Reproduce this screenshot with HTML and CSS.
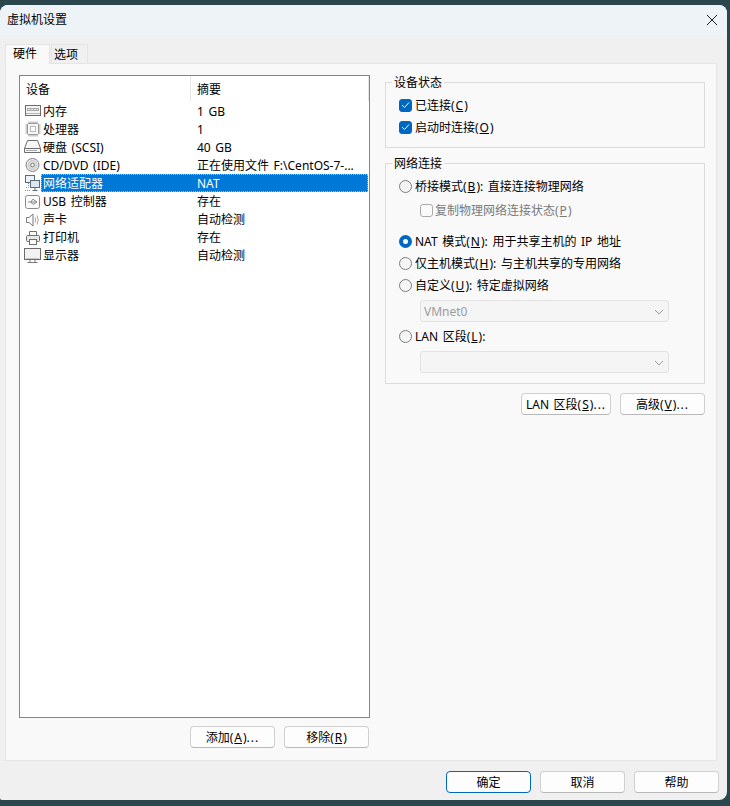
FILE: index.html
```html
<!DOCTYPE html>
<html lang="zh-CN">
<head>
<meta charset="utf-8">
<title>虚拟机设置</title>
<link rel="stylesheet" href="styles.css">
</head>
<body>
<div class="window">
  <header class="titlebar">
    <span class="title">虚拟机设置</span>
    <svg class="close" width="12" height="12" viewBox="0 0 12 12"><path d="M1 1L11 11M11 1L1 11" stroke="#222" stroke-width="1" fill="none"/></svg>
  </header>
  <div class="tabs">
    <div class="tab active">硬件</div>
    <div class="tab">选项</div>
  </div>
  <main class="panel">
    <section class="left">
      <div class="list">
        <div class="list-head">
          <div class="col-a">设备</div>
          <div class="col-b">摘要</div>
        </div>
        <div class="row">
          <svg class="icon" width="18" height="16" viewBox="0 0 18 16"><rect x="2.500" y="2.500" width="15" height="10" fill="#f4f4f4" stroke="#6c6c6c"/><rect x="4" y="5" width="12" height="3" fill="#a9a9a9"/><path d="M5 6.500h10" stroke="#eee" stroke-dasharray="2 1"/><path d="M3 10.500h14" stroke="#b5b5b5"/></svg>
          <div class="cells"><span class="name">内存</span><span class="sum">1 GB</span></div>
        </div>
        <div class="row">
          <svg class="icon" width="18" height="16" viewBox="0 0 18 16"><rect x="4.500" y="2.500" width="11" height="11" rx="1" fill="#f6f6f6" stroke="#999"/><rect x="7.500" y="5.500" width="5" height="5" fill="#fff" stroke="#777" stroke-dasharray="1 1"/><path d="M6 0.500v2M8 0.500v2M10 0.500v2M12 0.500v2M14 0.500v2M6 13.500v2M8 13.500v2M10 13.500v2M12 13.500v2M14 13.500v2M2.500 4h2M2.500 6h2M2.500 8h2M2.500 10h2M2.500 12h2M15.500 4h2M15.500 6h2M15.500 8h2M15.500 10h2M15.500 12h2" stroke="#999" fill="none"/></svg>
          <div class="cells"><span class="name">处理器</span><span class="sum">1</span></div>
        </div>
        <div class="row">
          <svg class="icon" width="18" height="16" viewBox="0 0 18 16"><path d="M4.500 1.500h10l3 8v4h-16v-4z" fill="#f7f7f7" stroke="#6c6c6c"/><path d="M1.500 9.500h16" stroke="#6c6c6c"/><path d="M3 11.500h11" stroke="#aaa"/></svg>
          <div class="cells"><span class="name">硬盘 (SCSI)</span><span class="sum">40 GB</span></div>
        </div>
        <div class="row">
          <svg class="icon" width="18" height="16" viewBox="0 0 18 16"><circle cx="9.500" cy="8" r="6.500" fill="#efefef" stroke="#808080"/><circle cx="9.500" cy="8" r="4.500" fill="#dcdcdc" stroke="#c6c6c6"/><circle cx="9.500" cy="8" r="1.800" fill="#fff" stroke="#777"/></svg>
          <div class="cells"><span class="name">CD/DVD (IDE)</span><span class="sum">正在使用文件 F:\CentOS-7-...</span></div>
        </div>
        <div class="row">
          <svg class="icon" width="18" height="16" viewBox="0 0 18 16"><rect x="2.500" y="0.500" width="9" height="7" fill="#eef3f8" stroke="#5b6b7b"/><rect x="7.500" y="5.500" width="9" height="7" fill="#dbe6f0" stroke="#5b6b7b"/><path d="M12 13v2M9.500 15.500h5" stroke="#5b6b7b"/><path d="M5.500 8v4.500H2M2 15.500h5" stroke="#8a8a8a" stroke-dasharray="1 1" fill="none"/></svg>
          <div class="cells selected"><span class="name">网络适配器</span><span class="sum">NAT</span></div>
        </div>
        <div class="row">
          <svg class="icon" width="18" height="16" viewBox="0 0 18 16"><rect x="2.500" y="1.500" width="14" height="13" rx="2" fill="#fbfbfb" stroke="#8a8a8a"/><path d="M5 8h9M11 6l3 2-3 2M8 8l1.500-2.500H11M8 8l1.500 2H11" stroke="#8a8a8a" fill="none"/></svg>
          <div class="cells"><span class="name">USB 控制器</span><span class="sum">存在</span></div>
        </div>
        <div class="row">
          <svg class="icon" width="18" height="16" viewBox="0 0 18 16"><path d="M3.500 5.500h2.500l4-3.500v12l-4-3.500H3.500z" fill="#fafafa" stroke="#7d7d7d"/><path d="M12 5.500q1.500 2.500 0 5M14 3.500q2.500 4.500 0 9" stroke="#a5a5a5" fill="none"/></svg>
          <div class="cells"><span class="name">声卡</span><span class="sum">自动检测</span></div>
        </div>
        <div class="row">
          <svg class="icon" width="18" height="16" viewBox="0 0 18 16"><path d="M6.500 5.500v-4h7v4" fill="#fff" stroke="#707070"/><rect x="3.500" y="5.500" width="13" height="6" rx="1" fill="#e8e8e8" stroke="#707070"/><rect x="6.500" y="9.500" width="7" height="5" fill="#fff" stroke="#707070"/></svg>
          <div class="cells"><span class="name">打印机</span><span class="sum">存在</span></div>
        </div>
        <div class="row">
          <svg class="icon" width="18" height="16" viewBox="0 0 18 16"><rect x="1.500" y="0.500" width="16" height="11" fill="#f2f2f2" stroke="#6c6c6c"/><path d="M3 10.500h13" stroke="#c9c9c9"/><path d="M7 12v2M12 12v2M4.500 14.500h10" stroke="#7a7a7a" fill="none"/></svg>
          <div class="cells"><span class="name">显示器</span><span class="sum">自动检测</span></div>
        </div>
      </div>
      <div class="btn-row left-btns">
        <button class="btn">添加(<u>A</u>)<span class="dots">...</span></button>
        <button class="btn">移除(<u>R</u>)</button>
      </div>
    </section>
    <section class="right">
      <fieldset class="group status">
        <legend>设备状态</legend>
        <label class="opt"><span class="check on"><svg width="9" height="8" viewBox="0 0 9 8"><path d="M1 4l2.500 2.500L8 1.500" stroke="#fff" fill="none"/></svg></span>已连接(<u>C</u>)</label>
        <label class="opt"><span class="check on"><svg width="9" height="8" viewBox="0 0 9 8"><path d="M1 4l2.500 2.500L8 1.500" stroke="#fff" fill="none"/></svg></span>启动时连接(<u>O</u>)</label>
      </fieldset>
      <fieldset class="group network">
        <legend>网络连接</legend>
        <label class="opt"><span class="radio"></span>桥接模式(<u>B</u>): 直接连接物理网络</label>
        <label class="opt sub disabled"><span class="check"></span>复制物理网络连接状态(<u>P</u>)</label>
        <label class="opt nat"><span class="radio on"></span>NAT 模式(<u>N</u>): 用于共享主机的 IP 地址</label>
        <label class="opt"><span class="radio"></span>仅主机模式(<u>H</u>): 与主机共享的专用网络</label>
        <label class="opt"><span class="radio"></span>自定义(<u>U</u>): 特定虚拟网络</label>
        <div class="combo"><span>VMnet0</span><svg width="10" height="6" viewBox="0 0 10 6"><path d="M1 1l4 4 4-4" stroke="#9a9a9a" fill="none"/></svg></div>
        <label class="opt lan"><span class="radio"></span>LAN 区段(<u>L</u>):</label>
        <div class="combo"><span></span><svg width="10" height="6" viewBox="0 0 10 6"><path d="M1 1l4 4 4-4" stroke="#9a9a9a" fill="none"/></svg></div>
      </fieldset>
      <div class="btn-row right-btns">
        <button class="btn lan-btn">LAN 区段(<u>S</u>)<span class="dots">...</span></button>
        <button class="btn">高级(<u>V</u>)<span class="dots">...</span></button>
      </div>
    </section>
  </main>
  <footer class="footer">
    <button class="btn default">确定</button>
    <button class="btn">取消</button>
    <button class="btn">帮助</button>
  </footer>
</div>
</body>
</html>
```
FILE: styles.css
```css
* { box-sizing: border-box; }
html, body { margin: 0; padding: 0; }
body {
  width: 730px;
  height: 806px;
  overflow: hidden;
  background: #2b474d;
  font-family: "Noto Sans", "Noto Sans CJK SC", sans-serif;
  font-size: 12px;
  line-height: 16px;
  word-spacing: 1.5px;
  color: #000;
  padding: 5px 3px 6px 0;
}
u { margin: 0 1px; }
.dots { letter-spacing: 1px; }
.window {
  height: 795px;
  background: #f0f0f0;
  border-radius: 8px 8px 8px 2px;
  overflow: hidden;
  display: flex;
  flex-direction: column;
}
.titlebar {
  height: 30px;
  background: #eef3f8;
  display: flex;
  align-items: center;
  justify-content: space-between;
  padding: 0 9px 0 7px;
  flex: none;
}
.title { font-size: 12px; }
.tabs {
  display: flex;
  align-items: flex-end;
  height: 28px;
  padding-left: 5px;
  flex: none;
}
.tab {
  width: 37px;
  height: 19px;
  margin-left: 1px;
  background: #f0f0f0;
  border: 1px solid #e4e4e4;
  border-bottom: 0;
  padding-left: 2px;
  line-height: 20px;
}
.tab.active {
  width: 45px;
  height: 20px;
  margin-left: 0;
  background: #f9f9f9;
  padding-left: 7px;
  line-height: 18px;
  margin-bottom: -1px;
  position: relative;
  z-index: 1;
}
.panel {
  width: 712px;
  height: 698px;
  margin-left: 5px;
  background: #f9f9f9;
  border: 1px solid #e5e5e5;
  display: flex;
  flex: none;
  padding: 11px 0 0 13px;
}
.left { width: 351px; flex: none; }
.list {
  height: 643px;
  background: #fff;
  border: 1px solid #858585;
}
.list-head { display: flex; height: 25px; margin-bottom: 1px; }
.col-a {
  width: 171px;
  padding: 6px 0 0 6px;
  border-right: 1px solid #e5e5e5;
}
.col-b {
  width: 178px;
  padding: 6px 0 0 6px;
  border-right: 1px solid #e5e5e5;
}
.row { display: flex; height: 18.1px; align-items: center; }
.icon { flex: none; width: 18px; margin-left: 3px; }
.cells {
  display: flex;
  flex: 1;
  height: 18px;
  margin-right: 1px;
  align-items: center;
  padding-top: 1px;
}
.cells.selected {
  background: #0078d7;
  color: #fff;
  outline: 1px dotted #8fc3ec;
  outline-offset: -1px;
}
.name { width: 156px; padding-left: 2px; flex: none; }
.sum { white-space: nowrap; }
.btn-row { display: flex; gap: 9px; justify-content: flex-end; }
.left-btns { margin: 8px 1px 0 0; }
.btn {
  width: 85px;
  height: 22px;
  padding: 2px 0 0;
  background: #fdfdfd;
  border: 1px solid #d0d0d0;
  border-bottom-color: #b8b8b8;
  border-radius: 4px;
  font: inherit;
  word-spacing: inherit;
  color: #000;
  text-align: center;
}
.lan-btn { width: 90px; }
.right { width: 320px; margin-left: 15px; flex: none; }
.group {
  margin: 0;
  padding: 0 0 0 13px;
  border: 1px solid #dcdcdc;
  min-width: 0;
}
.group legend {
  margin-left: -7px;
  padding: 1px 2px 0;
  line-height: 14px;
  height: 15px;
}
.status { height: 73px; padding-top: 4px; margin-bottom: 8px; }
.network { height: 228px; padding-top: 4px; margin-bottom: 9px; }
.opt { display: flex; align-items: center; height: 22px; padding-top: 2px; white-space: pre; }
.opt.sub { padding-left: 21px; margin-top: 2px; color: #7a7a7a; }
.opt.nat { margin-top: 9px; }
.opt.lan { margin-top: 3px; }
.check {
  width: 13px;
  height: 13px;
  margin: -2px 3px 0 0;
  border-radius: 3px;
  border: 1px solid #ababab;
  background: #fafafa;
  display: flex;
  align-items: center;
  justify-content: center;
  flex: none;
}
.sub .check { margin-right: 2px; }
.check.on { background: #0067c0; border-color: #0067c0; }
.radio {
  width: 13px;
  height: 13px;
  margin: -2px 3px 0 0;
  border-radius: 50%;
  border: 1px solid #7d7d7d;
  background: #f5f5f5;
  flex: none;
}
.radio.on { border: 4px solid #0067c0; background: #fff; }
.combo {
  width: 249px;
  height: 22px;
  margin: 4px 0 0 21px;
  background: #f5f5f5;
  border: 1px solid #e2e2e2;
  border-radius: 3px;
  display: flex;
  align-items: center;
  justify-content: space-between;
  padding: 1px 4px 0 3px;
  color: #9c9c9c;
}
.footer {
  display: flex;
  gap: 9px;
  justify-content: flex-end;
  padding: 10px 8px 0 0;
}
.btn.default { border: 1px solid #0067c0; }
```
